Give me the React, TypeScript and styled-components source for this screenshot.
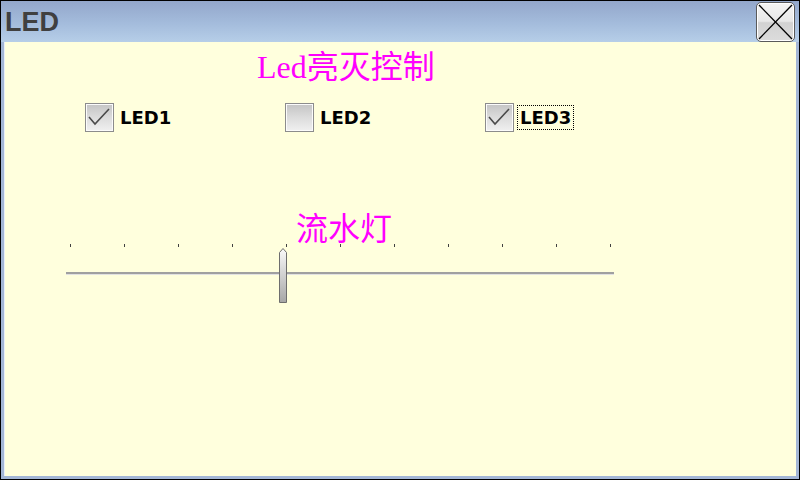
import React from 'react'
import styled, { createGlobalStyle } from 'styled-components'

const GlobalStyle = createGlobalStyle`
  html, body {
    margin: 0;
    padding: 0;
    background: #ffffff;
  }
`

const Window = styled.div`
  width: 800px;
  height: 480px;
  box-sizing: border-box;
  border: 1px solid #000000;
  background: #a3b6d6;
  display: flex;
  flex-direction: column;
  overflow: hidden;
`

const TitleBar = styled.div`
  height: 41px;
  flex: none;
  display: flex;
  align-items: center;
  justify-content: space-between;
  padding: 0 4px 0 4px;
  background: linear-gradient(180deg, #93a7cb 0%, #a4bcdc 55%, #b6cee8 100%);
`

const Title = styled.div`
  font-family: 'Liberation Sans', Arial, sans-serif;
  font-weight: bold;
  font-size: 27px;
  line-height: 30px;
  color: #404040;
  margin-top: 1px;
`

const CloseButton = styled.div`
  width: 37px;
  height: 38px;
  margin-top: 1px;
  border: 1px solid #5a5a5a;
  border-radius: 5px;
  box-shadow: inset 0 0 0 1px #ffffff;
  background: linear-gradient(180deg, #f4f4f4 0%, #e8e8e8 48%, #d2d2d2 52%, #dcdcdc 100%);
  display: flex;
  align-items: center;
  justify-content: center;
`

const Body = styled.div`
  flex: 1;
  margin: 0 3px 3px 3px;
  background: #ffffdd;
  border-left: 1px solid #e8eef8;
  display: flex;
  flex-direction: column;
`

const Heading = styled.div`
  margin: 7px 0 0 252px;
  font-family: 'Liberation Serif', 'Noto Sans CJK SC', serif;
  font-size: 32px;
  line-height: 36px;
  color: #ff00ff;
`

const CheckRow = styled.div`
  display: flex;
  margin-top: 18px;
  padding-left: 80px;
`

const CheckItem = styled.div`
  width: 200px;
  display: flex;
  align-items: center;
  gap: 3px;
`

const Box = styled.span`
  width: 27px;
  height: 27px;
  border: 1px solid #8c8c8c;
  box-shadow: inset 0 0 0 1px #fbfbfb;
  background: linear-gradient(180deg, #c4c4c4 0%, #dcdcdc 50%, #f0f0f0 100%);
  display: flex;
  align-items: center;
  justify-content: center;
`

const Label = styled.span<{ $focused?: boolean }>`
  font-family: 'DejaVu Sans', Verdana, sans-serif;
  font-weight: bold;
  font-size: 18px;
  line-height: 19px;
  color: #000000;
  padding: 2px;
  border: 1px dotted ${({ $focused }) => ($focused ? '#000000' : 'transparent')};
`

const SliderBlock = styled.div`
  margin: 79px 0 0 61px;
  width: 548px;
  display: flex;
  flex-direction: column;
`

const SliderLabel = styled(Heading)`
  margin: 0 0 -3px 230px;
`

const Ticks = styled.div`
  display: flex;
  justify-content: space-between;
  padding: 0 3px 0 4px;
  height: 3px;
`

const Tick = styled.span`
  width: 1px;
  height: 3px;
  background: #404040;
`

const Track = styled.div`
  position: relative;
  margin-top: 25px;
  height: 1px;
  border-top: 2px solid #a0a0a0;
  background: #e2e2e2;
`

const Thumb = styled.svg<{ $left: number }>`
  position: absolute;
  left: ${({ $left }) => $left}px;
  top: -26px;
`

const leds = [
  { name: 'LED1', on: true },
  { name: 'LED2', on: false },
  { name: 'LED3', on: true, focused: true },
]

const CheckMark = () => (
  <svg width="27" height="27" viewBox="0 0 27 27">
    <polyline points="3,13 9,20 23,5" fill="none" stroke="#4a4a4a" strokeWidth="1.6" />
  </svg>
)

export default function App() {
  const ticks = Array.from({ length: 11 })

  return (
    <>
      <GlobalStyle />
      <Window>
        <TitleBar>
          <Title>LED</Title>
          <CloseButton>
            <svg width="37" height="38" viewBox="0 0 37 38">
              <line x1="2" y1="2" x2="35" y2="36" stroke="#000" strokeWidth="1.3" />
              <line x1="35" y1="2" x2="2" y2="36" stroke="#000" strokeWidth="1.3" />
            </svg>
          </CloseButton>
        </TitleBar>
        <Body>
          <Heading>Led亮灭控制</Heading>
          <CheckRow>
            {leds.map((led) => (
              <CheckItem key={led.name}>
                <Box>{led.on && <CheckMark />}</Box>
                <Label $focused={led.focused}>{led.name}</Label>
              </CheckItem>
            ))}
          </CheckRow>
          <SliderBlock>
            <SliderLabel>流水灯</SliderLabel>
            <Ticks>
              {ticks.map((_, i) => (
                <Tick key={i} />
              ))}
            </Ticks>
            <Track>
              <Thumb $left={213} width="8" height="55" viewBox="0 0 8 55">
                <defs>
                  <linearGradient id="thumbFill" x1="0" y1="0" x2="0" y2="1">
                    <stop offset="0" stopColor="#fafafa" />
                    <stop offset="1" stopColor="#a6a6a6" />
                  </linearGradient>
                </defs>
                <path d="M0.5,4.5 L4,0.5 L7.5,4.5 L7.5,54.5 L0.5,54.5 Z" fill="url(#thumbFill)" stroke="#6e6e6e" strokeWidth="1" />
              </Thumb>
            </Track>
          </SliderBlock>
        </Body>
      </Window>
    </>
  )
}
